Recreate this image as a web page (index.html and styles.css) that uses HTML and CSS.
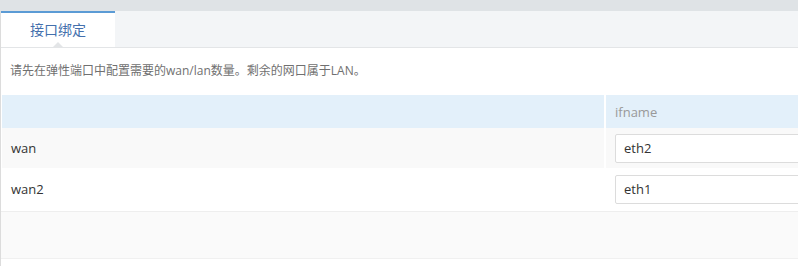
FILE: index.html
```html
<!DOCTYPE html>
<html lang="zh-CN">
  <head>
    <meta charset="UTF-8" />
    <title>接口绑定</title>
    <link rel="stylesheet" href="styles.css">
  </head>
  <body>
    <div class="topbar"></div>
    <div class="page">
      <div class="tabs">
        <div class="tab active">接口绑定</div>
      </div>
      <p class="notice">请先在弹性端口中配置需要的wan/lan数量。剩余的网口属于LAN。</p>
      <table class="bind-table">
        <colgroup>
          <col class="col-name" />
          <col class="col-if" />
        </colgroup>
        <thead>
          <tr>
            <th></th>
            <th class="cell-if">ifname</th>
          </tr>
        </thead>
        <tbody>
          <tr>
            <td>wan</td>
            <td class="cell-if"><input type="text" value="eth2" /></td>
          </tr>
          <tr>
            <td>wan2</td>
            <td class="cell-if"><input type="text" value="eth1" /></td>
          </tr>
        </tbody>
      </table>
      <div class="footer-bar"></div>
    </div>
  </body>
</html>
```

FILE: styles.css
```css
body {
  margin: 0;
  background: #fff;
  font-family: "Open Sans", "Noto Sans CJK SC", sans-serif;
  color: #333;
  overflow: hidden;
}

.topbar {
  height: 11px;
  background: #dfe3e6;
}

.page {
  border-left: 1px solid #dcdcdc;
  min-height: 255px;
}

.tabs {
  display: flex;
  height: 36px;
  background: #f3f5f7;
  border-bottom: 1px solid #e3e5e7;
}

.tab {
  position: relative;
  width: 114px;
  box-sizing: border-box;
  border-top: 2px solid #5b9bd5;
  background: #fff;
  color: #4470ad;
  font-size: 14px;
  line-height: 34px;
  text-align: center;
}

.tab.active::after {
  content: "";
  position: absolute;
  left: 51px;
  bottom: -1px;
  width: 0;
  height: 0;
  border-left: 6px solid transparent;
  border-right: 6px solid transparent;
  border-bottom: 6px solid #e3e5e7;
}

.notice {
  margin: 0;
  padding: 14px 9px 15px;
  font-size: 12px;
  line-height: 18px;
  color: #707070;
}

.bind-table {
  width: 820px;
  margin-left: 1px;
  border-collapse: collapse;
  table-layout: fixed;
  font-size: 13px;
}

.col-name {
  width: 603px;
}

.bind-table th {
  height: 33px;
  background: #e3f0fa;
  font-weight: normal;
  color: #999;
  text-align: left;
  padding: 0 9px;
}

.bind-table td {
  height: 40px;
  padding: 0 9px;
}

.bind-table tbody tr:nth-child(odd) td {
  background: #f9f9f9;
}

.bind-table tbody tr:nth-child(even) td {
  border-top: 1px solid #fff;
}

.bind-table .cell-if {
  border-left: 2px solid #fff;
  padding-left: 9px;
}

.bind-table input {
  width: 210px;
  height: 29px;
  box-sizing: border-box;
  border: 1px solid #dcdcdc;
  border-radius: 2px;
  padding: 0 8px;
  font-family: "Open Sans", sans-serif;
  font-size: 13px;
  color: #333;
  background: #fff;
}

.footer-bar {
  margin-top: 2px;
  height: 46px;
  background: #fafafa;
  border-top: 1px solid #eee;
  border-bottom: 1px solid #f0f0f0;
}
```
